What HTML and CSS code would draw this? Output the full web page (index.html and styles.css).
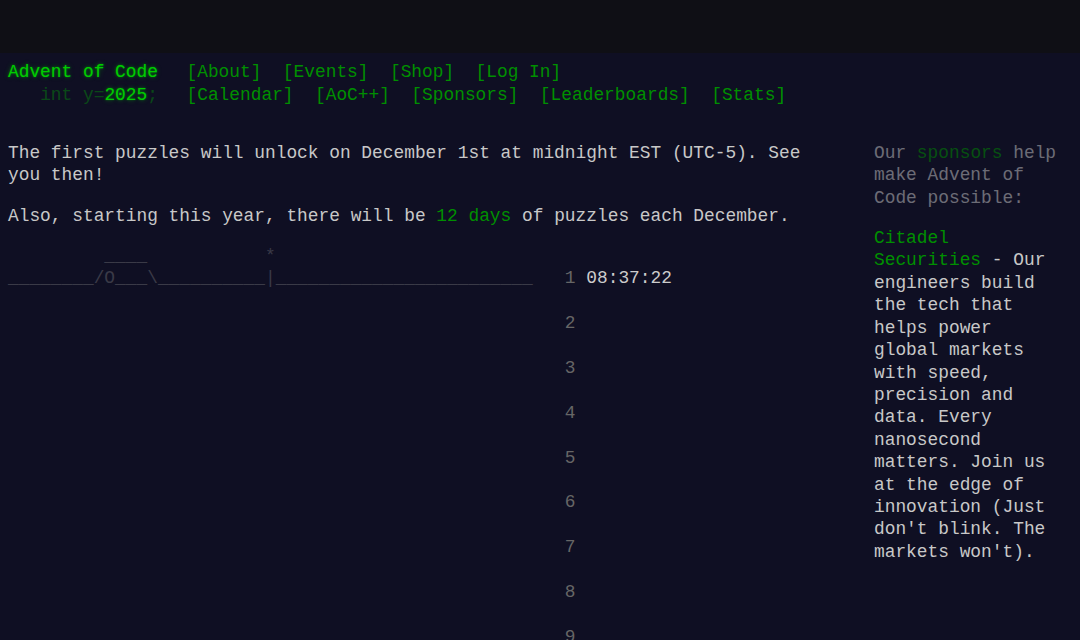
FILE: index.html
```html
<!DOCTYPE html>
<html lang="en">
<head>
<meta charset="utf-8">
<title>Advent of Code 2025</title>
<link rel="stylesheet" href="styles.css">
</head>
<body>
<div class="topbar"></div>
<div class="page">
  <header>
    <div class="header-row">
      <h1 class="title-global"><a href="#">Advent of Code</a></h1>
      <nav>
        <ul>
          <li><a href="#">[About]</a></li>
          <li><a href="#">[Events]</a></li>
          <li><a href="#">[Shop]</a></li>
          <li><a href="#">[Log In]</a></li>
        </ul>
      </nav>
    </div>
    <div class="header-row">
      <h1 class="title-event">&nbsp;&nbsp;&nbsp;<span class="title-event-wrap">int y=</span><a href="#">2025</a><span class="title-event-wrap">;</span></h1>
      <nav>
        <ul>
          <li><a href="#">[Calendar]</a></li>
          <li><a href="#">[AoC++]</a></li>
          <li><a href="#">[Sponsors]</a></li>
          <li><a href="#">[Leaderboards]</a></li>
          <li><a href="#">[Stats]</a></li>
        </ul>
      </nav>
    </div>
  </header>

  <div class="content">
    <main>
      <article>
        <p>The first puzzles will unlock on December 1st at midnight EST (UTC-5). See you then!</p>
        <p>Also, starting this year, there will be <a href="#">12 days</a> of puzzles each December.</p>
      </article>
<pre class="calendar"><span class="day"><span class="art">         ____           *</span>
<span class="art">________/O___\__________|________________________</span>   <span class="num">1</span> <span class="timer">08:37:22</span></span><span class="day">
                                                    <span class="num">2</span></span><span class="day">
                                                    <span class="num">3</span></span><span class="day">
                                                    <span class="num">4</span></span><span class="day">
                                                    <span class="num">5</span></span><span class="day">
                                                    <span class="num">6</span></span><span class="day">
                                                    <span class="num">7</span></span><span class="day">
                                                    <span class="num">8</span></span><span class="day">
                                                    <span class="num">9</span></span><span class="day">
                                                   <span class="num">10</span></span><span class="day">
                                                   <span class="num">11</span></span><span class="day">
                                                   <span class="num">12</span></span></pre>
    </main>

    <aside class="sidebar">
      <div class="quiet">Our <a href="#">sponsors</a> help make Advent of Code possible:</div>
      <div class="sponsor"><a href="#">Citadel Securities</a> - Our engineers build the tech that helps power global markets with speed, precision and data. Every nanosecond matters. Join us at the edge of innovation (Just don't blink. The markets won't).</div>
    </aside>
  </div>
</div>
</body>
</html>
```
FILE: styles.css
```css
html, body {
  margin: 0;
  padding: 0;
  overflow: hidden;
}

body {
  background: #0f0f23;
  color: #c8c8c8;
  font-family: "Liberation Mono", "DejaVu Sans Mono", monospace;
  font-size: 17.85px;
  line-height: 22.4px;
  min-width: 1080px;
}

.topbar {
  height: 53px;
  background: #0f0f15;
}

.page {
  padding: 8px 8px 0 8px;
}

a {
  color: #008f00;
  text-decoration: none;
}

header {
  white-space: nowrap;
  margin-bottom: 35px;
}

.header-row {
  display: flex;
  align-items: baseline;
  line-height: 23px;
}

header h1 {
  margin: 0;
  font-size: 1em;
  font-weight: normal;
  padding-right: 1em;
  line-height: 23px;
}

.title-global a,
.title-event a {
  color: #00cc00;
  text-shadow: 0 0 2px rgba(0, 204, 0, 0.5), 0 0 5px rgba(0, 204, 0, 0.4);
}

.title-event {
  color: #00cc00;
}

.title-event-wrap {
  opacity: 0.3;
  white-space: pre;
}

header nav ul {
  list-style: none;
  margin: 0;
  padding: 0;
  display: flex;
}

header nav li {
  padding: 0 0.6em;
}

.content {
  display: flex;
  align-items: flex-start;
}

main {
  flex: 1 1 auto;
  min-width: 0;
}

article p {
  margin: 0 0 1em 0;
}

.calendar {
  margin: 0;
  font-family: inherit;
  font-size: 1em;
  line-height: 22.4px;
  color: #666666;
}

.calendar .day {
  display: block;
}

.calendar .art {
  color: #3a3a47;
}

.calendar .num {
  color: #666666;
}

.calendar .timer {
  color: #cccccc;
}

.sidebar {
  flex: 0 0 188px;
  width: 188px;
  margin: 0 10px 0 37px;
}

.quiet {
  opacity: 0.5;
}

.sponsor {
  margin-top: 1em;
}
```
